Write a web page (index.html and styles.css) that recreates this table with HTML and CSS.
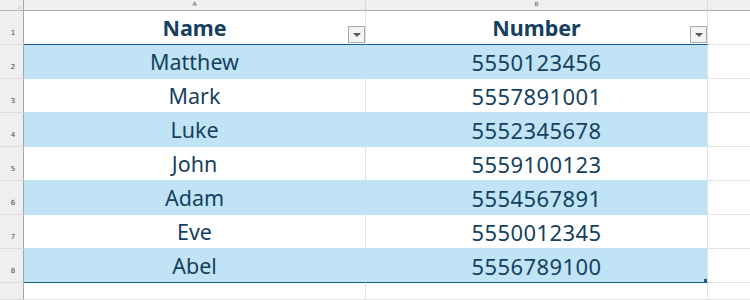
FILE: index.html
```html
<!DOCTYPE html>
<html>
<head>
<meta charset="utf-8">
<link rel="stylesheet" href="styles.css">
</head>
<body>
<div class="sheet">
  <div class="corner"><span class="corner-tri"></span></div>
  <div class="colhead">A</div>
  <div class="colhead">B</div>
  <div class="colhead last"></div>

  <div class="rowhead">1</div>
  <div class="cell hdr">Name<span class="filter"><span class="arrow"></span></span></div>
  <div class="cell hdr colb">Number<span class="filter"><span class="arrow"></span></span></div>
  <div class="cell extra"></div>

  <div class="rowhead">2</div>
  <div class="cell band">Matthew</div>
  <div class="cell band colb num">5550123456</div>
  <div class="cell extra"></div>

  <div class="rowhead">3</div>
  <div class="cell plain">Mark</div>
  <div class="cell plain colb num">5557891001</div>
  <div class="cell extra"></div>

  <div class="rowhead">4</div>
  <div class="cell band">Luke</div>
  <div class="cell band colb num">5552345678</div>
  <div class="cell extra"></div>

  <div class="rowhead">5</div>
  <div class="cell plain">John</div>
  <div class="cell plain colb num">5559100123</div>
  <div class="cell extra"></div>

  <div class="rowhead">6</div>
  <div class="cell band">Adam</div>
  <div class="cell band colb num">5554567891</div>
  <div class="cell extra"></div>

  <div class="rowhead">7</div>
  <div class="cell plain">Eve</div>
  <div class="cell plain colb num">5550012345</div>
  <div class="cell extra"></div>

  <div class="rowhead">8</div>
  <div class="cell band lastrow">Abel</div>
  <div class="cell band lastrow colb num">5556789100<span class="handle"></span></div>
  <div class="cell extra"></div>

  <div class="rowhead"></div>
  <div class="cell empty"></div>
  <div class="cell empty"></div>
  <div class="cell empty extra"></div>
</div>
</body>
</html>
```

FILE: styles.css
```css
html, body {
  margin: 0;
  padding: 0;
  background: #ffffff;
}

.sheet {
  width: 750px;
  height: 300px;
  overflow: hidden;
  display: grid;
  grid-template-columns: 24px 342px 342px 1fr;
  grid-template-rows: 11px repeat(8, 34px) 1fr;
  font-family: "Noto Sans", "Open Sans", sans-serif;
}

.corner {
  position: relative;
  background: #efefef;
  border-right: 1px solid #a6a6a6;
  border-bottom: 1px solid #b4b4b4;
}

.corner-tri {
  position: absolute;
  right: 2px;
  bottom: 1px;
  width: 0;
  height: 0;
  border-left: 4px solid transparent;
  border-bottom: 4px solid #d4d4d4;
}

.colhead {
  background: #efefef;
  border-right: 1px solid #dadada;
  border-bottom: 1px solid #acacac;
  font-family: "DejaVu Sans", sans-serif;
  font-size: 6px;
  line-height: 6px;
  color: #555555;
  display: flex;
  justify-content: center;
  align-items: flex-start;
  padding-top: 1px;
}

.colhead.last {
  border-right: none;
}

.rowhead {
  background: #efefef;
  border-right: 1px solid #a6a6a6;
  border-bottom: 1px solid #dcdcdc;
  font-family: "DejaVu Sans", sans-serif;
  font-size: 7px;
  line-height: 7px;
  color: #444444;
  display: flex;
  justify-content: center;
  align-items: flex-end;
  padding-bottom: 7px;
  padding-left: 3px;
  box-sizing: border-box;
}

.cell {
  position: relative;
  box-sizing: border-box;
  border-right: 1px solid #e1e1e1;
  border-bottom: 1px solid #e1e1e1;
  display: flex;
  justify-content: center;
  align-items: center;
  font-size: 21.5px;
  color: #15415f;
  white-space: nowrap;
}

.cell.num {
  font-size: 22px;
  letter-spacing: 0.4px;
}

.cell.extra {
  border-right: none;
}

.hdr {
  font-weight: 700;
  border-bottom: 1px solid #156082;
}

.band {
  background: #c0e4f5;
  border-right-color: #c0e4f5;
  border-bottom-color: #c0e4f5;
}

.band.colb {
  border-right-color: #e1e1e1;
}

.plain {
  border-bottom-color: #c0e4f5;
}

.band.lastrow {
  border-bottom-color: #156082;
}

.filter {
  position: absolute;
  right: 0;
  bottom: 1px;
  width: 17px;
  height: 17px;
  box-sizing: border-box;
  border: 1px solid #a9a9a9;
  background: #f3f4f6;
  display: flex;
  justify-content: center;
  align-items: center;
}

.arrow {
  width: 0;
  height: 0;
  border-left: 4px solid transparent;
  border-right: 4px solid transparent;
  border-top: 4px solid #5a5a5a;
  margin-top: 1px;
}

.handle {
  position: absolute;
  right: 0;
  bottom: 0;
  width: 3px;
  height: 3px;
  background: #156082;
}
```
